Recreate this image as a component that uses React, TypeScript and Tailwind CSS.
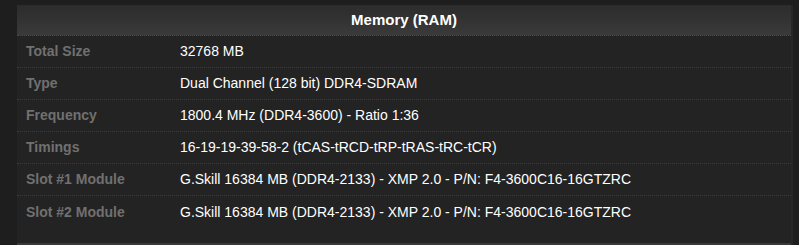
const rows: [string, string][] = [
  ["Total Size", "32768 MB"],
  ["Type", "Dual Channel (128 bit) DDR4-SDRAM"],
  ["Frequency", "1800.4 MHz (DDR4-3600) - Ratio 1:36"],
  ["Timings", "16-19-19-39-58-2 (tCAS-tRCD-tRP-tRAS-tRC-tCR)"],
  ["Slot #1 Module", "G.Skill 16384 MB (DDR4-2133) - XMP 2.0 - P/N: F4-3600C16-16GTZRC"],
  ["Slot #2 Module", "G.Skill 16384 MB (DDR4-2133) - XMP 2.0 - P/N: F4-3600C16-16GTZRC"],
];

export default function App() {
  return (
    <div className="w-[799px] h-[245px] overflow-hidden bg-[#1e1e1e] font-['Liberation_Sans',Arial,sans-serif] text-[14px]">
      <div className="flex pt-[5px] pl-[17px]">
        <div className="w-[774px] flex flex-col">
          {/* panel */}
          <div className="bg-[#232323] pb-[15px]">
            <div className="h-[31px] flex items-center justify-center border-b border-dotted border-[#4a4a4a] bg-gradient-to-b from-[#2c2c2c] to-[#3a3a3a]">
              <span className="font-bold text-white text-[15px] pt-[1px]">Memory (RAM)</span>
            </div>
            {rows.map(([label, value], i) => (
              <div
                key={label}
                className={`flex h-[32px] items-center ${i < rows.length - 1 ? "border-b border-dotted border-[#3c3c3c]" : ""}`}
              >
                <div className="w-[163px] pl-[9px] font-bold text-[#707070]">{label}</div>
                <div className="text-white">{value}</div>
              </div>
            ))}
          </div>
          <div className="h-[10px] bg-[#383838]" />
        </div>
        <div className="w-[2px] h-[245px] bg-[#272727]" />
      </div>
    </div>
  );
}
